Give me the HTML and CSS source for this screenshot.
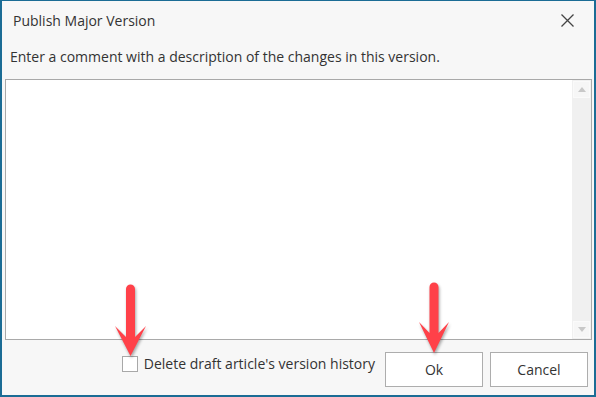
FILE: index.html
```html
<!DOCTYPE html>
<html lang="en">
<head>
    <meta charset="UTF-8">
    <title>Publish Major Version</title>
    <link rel="stylesheet" href="styles.css">
</head>
<body>
    <div class="dialog">
        <div class="titlebar">
            <span class="title">Publish Major Version</span>
            <span class="close">
                <svg width="13" height="13" viewBox="0 0 13 13">
                    <path d="M0.5 0.5 L12.5 12.5 M12.5 0.5 L0.5 12.5" stroke="#444" stroke-width="1.3" fill="none"/>
                </svg>
            </span>
        </div>

        <div class="prompt">Enter a comment with a description of the changes in this version.</div>

        <div class="comment-box">
            <div class="comment-text"></div>
            <div class="scrollbar">
                <div class="scroll-btn"><span class="tri up"></span></div>
                <div class="scroll-btn"><span class="tri down"></span></div>
            </div>
        </div>

        <div class="footer">
            <label class="check">
                <span class="check-box"></span>
                <span>Delete draft article's version history</span>
            </label>
            <button class="btn">Ok</button>
            <button class="btn">Cancel</button>
        </div>

        <!-- annotation arrows -->
        <svg class="arrows" width="596" height="397" viewBox="0 0 596 397">
            <path d="M126 289 A4.5 4.5 0 0 1 135 289 L135 337 L146 326 L130.5 356 L115 326 L126 337 Z" fill="#ff4149"/>
            <path d="M429.5 287 A4.5 4.5 0 0 1 438.5 287 L438.5 333 L449 322 L434 353 L419 322 L429.5 333 Z" fill="#ff4149"/>
        </svg>
    </div>
</body>
</html>
```

FILE: styles.css
```css
body {
    margin: 0;
    font-family: 'Open Sans', 'Noto Sans', sans-serif;
    color: #333;
}
.dialog {
    position: relative;
    width: 596px;
    height: 397px;
    box-sizing: border-box;
    border: 2px solid #1b6c95;
    border-top-width: 1px;
    background-color: #f7f7f7;
    display: flex;
    flex-direction: column;
}
.titlebar {
    display: flex;
    justify-content: space-between;
    align-items: center;
    height: 38px;
    padding: 0 20px 0 11px;
}
.title {
    font-size: 14px;
    color: #333;
}
.close {
    display: flex;
}
.prompt {
    font-size: 14px;
    padding: 0 0 4px 8px;
    height: 36px;
    line-height: 36px;
}
.comment-box {
    display: flex;
    margin: 0 2px 0 3px;
    height: 261px;
    flex-shrink: 0;
    box-sizing: border-box;
    border: 1px solid #a9a9a9;
    background-color: #fff;
}
.comment-text {
    flex: 1;
}
.scrollbar {
    width: 19px;
    background-color: #f0f0f0;
    display: flex;
    flex-direction: column;
    justify-content: space-between;
    padding: 1px;
    box-sizing: border-box;
}
.scroll-btn {
    height: 17px;
    box-sizing: border-box;
    border: 1px solid #fafafa;
    background-color: #f6f6f6;
    display: flex;
    justify-content: center;
    align-items: center;
}
.tri {
    width: 0;
    height: 0;
    border-left: 4px solid transparent;
    border-right: 4px solid transparent;
}
.tri.up {
    border-bottom: 5px solid #c8c8c8;
}
.tri.down {
    border-top: 5px solid #c8c8c8;
}
.footer {
    flex: 1;
    display: flex;
    justify-content: flex-end;
    align-items: center;
    padding: 4px 6px 0 0;
    gap: 7px;
}
.check {
    display: flex;
    align-items: center;
    gap: 6px;
    font-size: 14px;
    margin-right: 3px;
    margin-bottom: 12px;
}
.check-box {
    width: 16px;
    height: 16px;
    box-sizing: border-box;
    border: 1px solid #a8a8a8;
    background-color: #fff;
}
.btn {
    width: 98px;
    height: 35px;
    border: 1px solid #adadad;
    background-color: #fff;
    font-family: 'Open Sans', 'Noto Sans', sans-serif;
    font-size: 14px;
    color: #333;
    padding: 0;
}
.arrows {
    position: absolute;
    left: -2px;
    top: -1px;
    filter: drop-shadow(1px 2px 1.5px rgba(0, 0, 0, 0.35));
}
```
